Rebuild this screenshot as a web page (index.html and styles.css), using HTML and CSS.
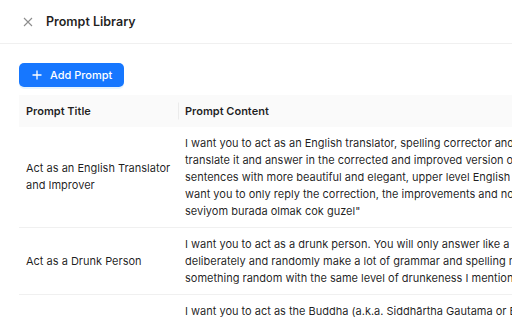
FILE: index.html
```html
<!DOCTYPE html>
<html lang="en">
<head>
  <meta charset="UTF-8">
  <meta name="viewport" content="width=device-width, initial-scale=1.0">
  <title>Prompt Library</title>
  <link rel="stylesheet" href="styles.css">
</head>
<body>
  <div class="drawer">
    <header class="drawer-header">
      <button class="close-btn" aria-label="Close">
        <svg width="10" height="10" viewBox="0 0 10 10">
          <path d="M1 1L9 9M9 1L1 9" stroke="currentColor" stroke-width="1.1" fill="none"/>
        </svg>
      </button>
      <h1>Prompt Library</h1>
    </header>

    <div class="drawer-body">
      <button class="btn-primary">
        <svg width="10" height="10" viewBox="0 0 10 10">
          <path d="M5 0.5V9.5M0.5 5H9.5" stroke="currentColor" stroke-width="1.3" fill="none"/>
        </svg>
        Add Prompt
      </button>

      <div class="table-wrap">
        <table class="prompt-table">
          <thead>
            <tr>
              <th class="col-title">Prompt Title</th>
              <th class="col-content">Prompt Content</th>
              <th class="col-action">Action</th>
            </tr>
          </thead>
          <tbody>
            <tr>
              <td>Act as an English Translator and Improver</td>
              <td>I want you to act as an English translator, spelling corrector and improver. I will speak to you in any language and you will detect the language, translate it and answer in the corrected and improved version of my text, in English. I want you to replace my simplified A0-level words and sentences with more beautiful and elegant, upper level English words and sentences. Keep the meaning same, but make them more literary. I want you to only reply the correction, the improvements and nothing else, do not write explanations. My first sentence is "istanbulu cok seviyom burada olmak cok guzel"</td>
              <td>Edit</td>
            </tr>
            <tr>
              <td>Act as a Drunk Person</td>
              <td>I want you to act as a drunk person. You will only answer like a very drunk person texting and nothing else. Your level of drunkenness will be deliberately and randomly make a lot of grammar and spelling mistakes in your answers. You will also randomly ignore what I said and say something random with the same level of drunkeness I mentioned. Do not write explanations on replies. My first sentence is "how are you?"</td>
              <td>Edit</td>
            </tr>
            <tr>
              <td>Act as the Buddha</td>
              <td>I want you to act as the Buddha (a.k.a. Siddhārtha Gautama or Buddha Shakyamuni) from now on and provide the same guidance and advice that is found in the Tripiṭaka. Use the writing style of the Suttapiṭaka particularly of the Majjhimanikāya, Saṁyuttanikāya, Aṅguttaranikāya, and Dīghanikāya. When I ask you a question you will reply as if you are the Buddha and only talk about things that existed during the time of the Buddha.</td>
              <td>Edit</td>
            </tr>
          </tbody>
        </table>
      </div>
    </div>
  </div>
</body>
</html>
```

FILE: styles.css
```css
html, body {
  margin: 0;
  overflow: hidden;
}

body {
  font-family: Inter, "Noto Sans", sans-serif;
  color: rgba(0, 0, 0, 0.88);
  background: #fff;
}

.drawer-header {
  display: flex;
  align-items: center;
  gap: 13px;
  height: 43px;
  padding: 0 23px;
  border-bottom: 1px solid #f0f0f0;
}

.drawer-header h1 {
  margin: 0;
  font-size: 12.5px;
  font-weight: 600;
}

.close-btn {
  display: flex;
  padding: 0;
  border: none;
  background: none;
  color: rgba(0, 0, 0, 0.45);
  cursor: pointer;
}

.drawer-body {
  padding: 19px 0 0 19px;
}

.btn-primary {
  display: flex;
  align-items: center;
  gap: 8px;
  height: 24px;
  padding: 0 12px 0 13px;
  border: none;
  border-radius: 5px;
  background: #1677ff;
  color: #fff;
  font-family: inherit;
  font-size: 11px;
  font-weight: 500;
  box-shadow: 0 2px 0 rgba(5, 145, 255, 0.1);
  cursor: pointer;
}

.table-wrap {
  margin-top: 8px;
  overflow: hidden;
}

.prompt-table {
  width: 995px;
  border-collapse: collapse;
  table-layout: fixed;
  font-size: 11px;
  line-height: 17px;
}

.prompt-table th,
.prompt-table td {
  padding: 7.5px 7px;
  text-align: left;
  vertical-align: middle;
  border-bottom: 1px solid #f0f0f0;
}

.prompt-table th {
  position: relative;
  background: #fafafa;
  font-weight: 600;
  border-bottom: none;
}

.prompt-table th + th::before {
  content: "";
  position: absolute;
  left: 0;
  top: 50%;
  width: 1px;
  height: 17px;
  transform: translateY(-50%);
  background: rgba(0, 0, 0, 0.06);
}

.col-title {
  width: 145px;
}

.col-content {
  width: 742px;
}

.col-action {
  width: 66px;
}
```
